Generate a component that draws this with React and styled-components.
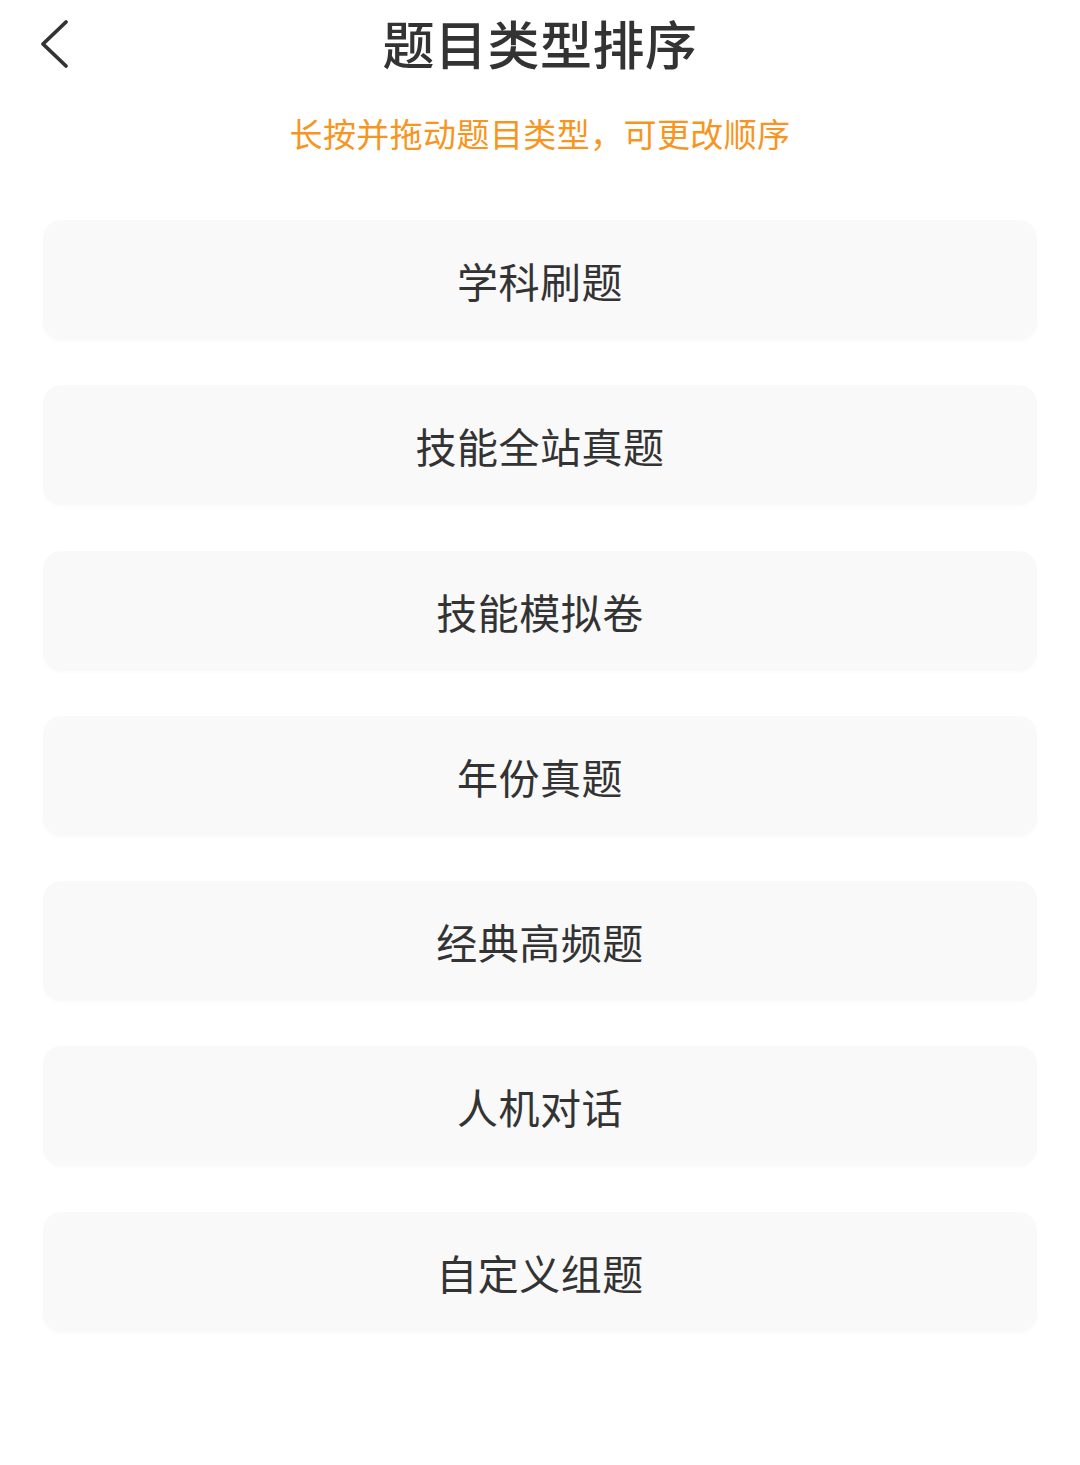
import React from 'react';
import styled, { createGlobalStyle } from 'styled-components';

const GlobalStyle = createGlobalStyle`
  html, body {
    margin: 0;
    padding: 0;
    background: #ffffff;
  }
  body {
    font-family: "Noto Sans CJK SC", "Noto Sans", sans-serif;
    color: #333333;
  }
`;

const TYPES = [
  '学科刷题',
  '技能全站真题',
  '技能模拟卷',
  '年份真题',
  '经典高频题',
  '人机对话',
  '自定义组题',
];

const App = () => {
  return (
    <>
      <GlobalStyle />
      <Page>
        <Header>
          <BackButton aria-label="返回">
            <svg width="30" height="50" viewBox="0 0 30 50" fill="none">
              <path
                d="M26 3 L3 25 L26 47"
                stroke="#333"
                strokeWidth="3.8"
                strokeLinecap="round"
                strokeLinejoin="round"
              />
            </svg>
          </BackButton>
          <Title>题目类型排序</Title>
          <span />
        </Header>
        <Hint>长按并拖动题目类型，可更改顺序</Hint>
        <List>
          {TYPES.map((name) => (
            <Card key={name}>{name}</Card>
          ))}
        </List>
      </Page>
    </>
  );
};

const Page = styled.div`
  width: 1080px;
  min-height: 1465px;
  background: #ffffff;
`;

const Header = styled.header`
  height: 90px;
  display: grid;
  grid-template-columns: 1fr auto 1fr;
  align-items: center;
`;

const BackButton = styled.button`
  justify-self: start;
  margin-left: 40px;
  margin-top: -2px;
  padding: 0;
  border: none;
  background: none;
  display: flex;
  cursor: pointer;
`;

const Title = styled.h1`
  margin: -4px 0 0;
  font-size: 52px;
  line-height: 60px;
  font-weight: 500;
  color: #333333;
  letter-spacing: 0.5px;
`;

const Hint = styled.p`
  margin: 21px 0 0;
  text-align: center;
  font-size: 33px;
  line-height: 44px;
  letter-spacing: 0.4px;
  color: #f7951e;
`;

const List = styled.div`
  margin-top: 65px;
  padding: 0 43px;
  display: flex;
  flex-direction: column;
  gap: 45.3px;
`;

const Card = styled.div`
  height: 120px;
  border-radius: 18px;
  background: #f9f9f9;
  box-shadow: 0 2px 3px rgba(0, 0, 0, 0.015);
  display: flex;
  align-items: center;
  justify-content: center;
  font-size: 41px;
  color: #333333;
  letter-spacing: 0.5px;
`;

export default App;
